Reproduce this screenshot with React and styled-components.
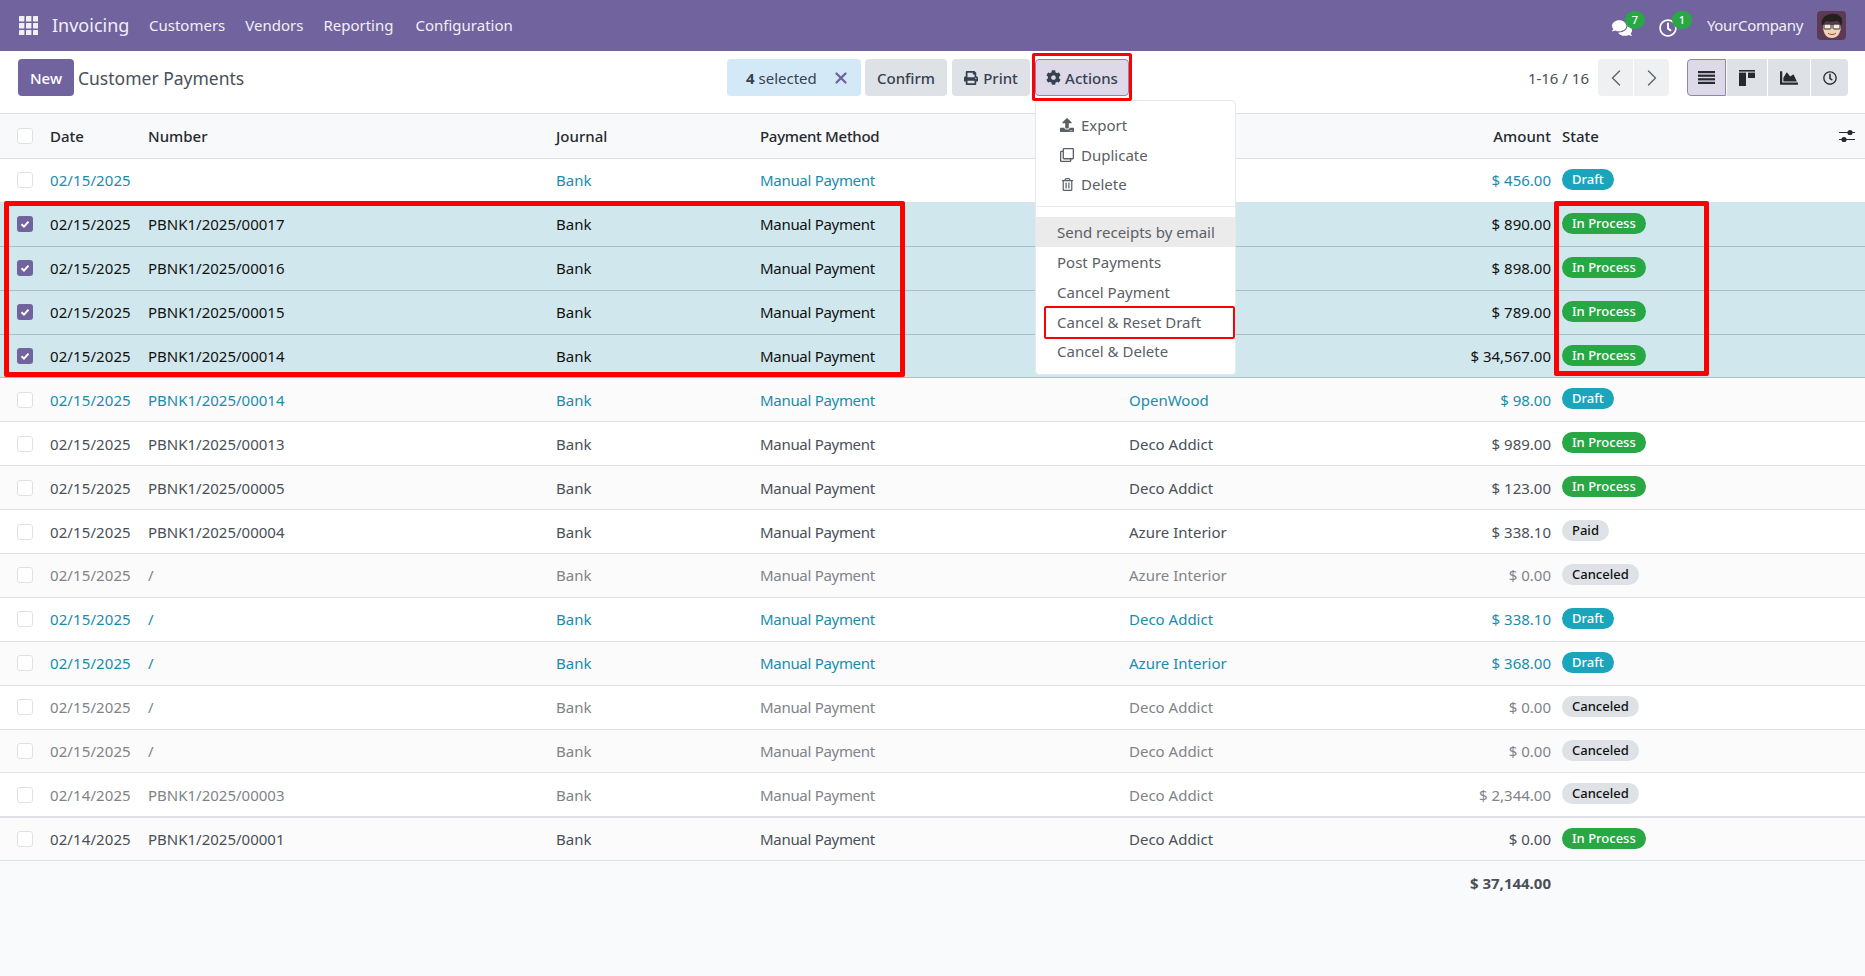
import React from 'react'
import styled, { createGlobalStyle } from 'styled-components'
import { FaCog, FaPrint, FaUpload, FaRegClone, FaRegTrashAlt, FaComments, FaRegClock, FaChartArea } from 'react-icons/fa'
import { ChevronLeft, ChevronRight, X } from 'lucide-react'

const GlobalStyle = createGlobalStyle`
	html, body {
		margin: 0;
		padding: 0;
		background: #fff;
		font-family: "Noto Sans", "Open Sans", sans-serif;
		font-size: 15px;
		color: #495057;
	}
`

const Page = styled.div`
	position: relative;
	width: 1865px;
	height: 976px;
	overflow: hidden;
	display: flex;
	flex-direction: column;
	background: #f9fafb;
`

// Top navigation
const Navbar = styled.header`
	height: 51px;
	flex: none;
	box-sizing: border-box;
	display: flex;
	align-items: center;
	background: #71639e;
	color: #f1eff6;
	padding: 0 19px;
`

const AppsIcon = styled.svg`
	width: 19px;
	height: 19px;
	margin-right: 14px;
	fill: #f1eff6;
`

const Brand = styled.span`
	font-size: 18px;
	width: 97px;
	margin-top: -2px;
`

const NavItem = styled.span`
	font-size: 15px;
	margin-top: -2px;
	margin-right: ${(p) => p.$gap}px;
`

const NavRight = styled.div`
	margin-left: auto;
	display: flex;
	align-items: center;
`

const NavIcon = styled.span`
	position: relative;
	display: flex;
	align-items: center;
	justify-content: center;
	width: 24px;
	height: 24px;
	margin-right: ${(p) => p.$gap}px;
	font-size: ${(p) => p.$size}px;
	color: #fff;
	padding-top: 4px;
	box-sizing: border-box;
`

const CountBadge = styled.span`
	position: absolute;
	top: -3px;
	left: ${(p) => p.$left}px;
	width: 20px;
	height: 18px;
	border-radius: 9px;
	background: #28a745;
	color: #fff;
	font-size: 11px;
	font-weight: 500;
	line-height: 18px;
	text-align: center;
`

const Company = styled.span`
	font-size: 15px;
	margin-top: -2px;
	margin-right: 14px;
	letter-spacing: -0.3px;
`

const Avatar = styled.svg`
	width: 29px;
	height: 29px;
	display: block;
`

// Control panel
const ControlPanel = styled.div`
	height: 62px;
	flex: none;
	box-sizing: border-box;
	padding: 8px 17px 0 18px;
	display: flex;
	align-items: flex-start;
	background: #fff;
`

const TitleArea = styled.div`
	flex: 0 0 709px;
	display: flex;
	align-items: center;
	height: 37px;
`

const NewButton = styled.button`
	width: 56px;
	height: 37px;
	padding: 0;
	border: none;
	border-radius: 4px;
	background: #71639e;
	color: #fff;
	font: 500 15px "Noto Sans", sans-serif;
`

const Title = styled.span`
	font-size: 17.5px;
	margin-left: 4px;
	color: #495057;
`

const Actions = styled.div`
	display: flex;
	align-items: center;
	height: 37px;
`

const SelectedBox = styled.div`
	width: 134px;
	height: 37px;
	box-sizing: border-box;
	padding: 0 11px 0 19px;
	margin-right: 4px;
	display: flex;
	align-items: center;
	justify-content: space-between;
	border-radius: 4px;
	background: #d4e9f7;
	color: #374151;
	font-size: 15px;
	b {
		font-weight: 700;
	}
	svg {
		color: #71639e;
	}
`

const ToolButton = styled.button`
	width: ${(p) => p.$width}px;
	height: 37px;
	padding: 0;
	margin-right: ${(p) => p.$gap}px;
	box-sizing: border-box;
	display: flex;
	align-items: center;
	justify-content: center;
	gap: ${(p) => (p.$active ? 4 : 5)}px;
	border: ${(p) => (p.$active ? '1px solid #8f84b6' : 'none')};
	border-radius: 4px;
	background: ${(p) => (p.$active ? '#ddd9e8' : '#dee2e6')};
	color: #374151;
	font: 500 15px "Noto Sans", sans-serif;
`

const Pager = styled.div`
	margin-left: auto;
	display: flex;
	align-items: center;
	height: 37px;
`

const PagerText = styled.span`
	font-size: 15px;
	margin-right: 9px;
	color: #495057;
`

const PagerButton = styled.button`
	width: 35px;
	height: 37px;
	padding: 0;
	border: none;
	margin-right: ${(p) => (p.$first ? 1 : 0)}px;
	border-radius: ${(p) => (p.$first ? '4px 0 0 4px' : '0 4px 4px 0')};
	background: #eef0f2;
	color: #5f656b;
	display: flex;
	align-items: center;
	justify-content: center;
`

const ViewSwitch = styled.div`
	display: flex;
	margin-left: 18px;
	gap: 1px;
`

const ViewButton = styled.button`
	width: ${(p) => p.$width}px;
	height: 37px;
	padding: 0;
	box-sizing: border-box;
	border: ${(p) => (p.$active ? '1px solid #8f84b6' : 'none')};
	border-radius: ${(p) => p.$radius};
	background: ${(p) => (p.$active ? '#ddd9e8' : '#dee2e6')};
	color: #262a2f;
	display: flex;
	align-items: center;
	justify-content: center;
`

// List table
const columns = '50px 98px 408px 204px 369px 200px 222px 1fr'

const HeadRow = styled.div`
	height: 46px;
	flex: none;
	box-sizing: border-box;
	display: grid;
	grid-template-columns: ${columns};
	align-items: center;
	background: #f8f9fa;
	border-top: 1px solid #dee2e6;
	border-bottom: 1px solid #dee2e6;
	color: #262a2f;
	font-weight: 500;
`

const Row = styled.div`
	height: 43.9px;
	flex: none;
	box-sizing: border-box;
	display: grid;
	grid-template-columns: ${columns};
	align-items: center;
	background: ${(p) => (p.$selected ? '#d0e8ed' : p.$odd ? '#fbfbfb' : '#fff')};
	border-bottom: 1px solid ${(p) => (p.$selected ? '#a9bfc5' : '#dee2e6')};
	border-top: ${(p) => (p.$thick ? '1px solid #dee2e6' : 'none')};
	color: ${(p) => (p.$selected ? '#111' : p.$kind === 'link' ? '#1a8cab' : p.$kind === 'muted' ? '#7f8489' : '#495057')};
`

const CheckCell = styled.div`
	padding-left: 17px;
	display: flex;
	align-items: center;
`

const Check = styled.span`
	width: 16px;
	height: 16px;
	box-sizing: border-box;
	border-radius: 3px;
	border: ${(p) => (p.$checked ? 'none' : '1px solid #dee2e6')};
	background: ${(p) => (p.$checked ? '#71639e' : '#fff')};
	display: flex;
	align-items: center;
	justify-content: center;
`

const DateCell = styled.div`
	letter-spacing: 0.1px;
`

const MethodCell = styled.div`
	letter-spacing: -0.3px;
`

const Amount = styled.div`
	text-align: right;
`

const StateCell = styled.div`
	padding-left: 11px;
	display: flex;
	align-items: center;
	justify-content: space-between;
	padding-right: 10px;
`

const Badge = styled.span`
	height: 21px;
	box-sizing: border-box;
	padding: 0 10px;
	margin-bottom: 2px;
	border-radius: 11px;
	font-size: 13px;
	font-weight: 500;
	line-height: 21px;
	white-space: nowrap;
	background: ${(p) => (p.$state === 'Draft' ? '#1aa5bb' : p.$state === 'In Process' ? '#28a745' : '#dee2e6')};
	color: ${(p) => (p.$state === 'Draft' || p.$state === 'In Process' ? '#fff' : '#111')};
`

const Footer = styled.div`
	display: grid;
	grid-template-columns: ${columns};
	padding-top: 12px;
	color: #495057;
	font-weight: 700;
`

const FooterTotal = styled.div`
	grid-column: 7;
	text-align: right;
`

// Overlays
const Menu = styled.div`
	position: absolute;
	left: 1035px;
	top: 100px;
	width: 201px;
	height: 275px;
	box-sizing: border-box;
	padding-top: 9px;
	background: #fff;
	border: 1px solid #e6e8eb;
	border-radius: 4px;
	color: #5b6066;
	z-index: 2;
`

const MenuItem = styled.div`
	height: 29.8px;
	display: flex;
	align-items: center;
	padding-left: ${(p) => (p.$icon ? 24 : 21)}px;
	gap: 7px;
	background: ${(p) => (p.$hover ? '#ebebeb' : 'transparent')};
`

const MenuIcon = styled.span`
	width: 14px;
	display: flex;
	justify-content: center;
	color: #5b6066;
`

const MenuDivider = styled.div`
	height: 1px;
	background: #e9ecef;
	margin: 7px 0 10px;
`

const RedBox = styled.div`
	position: absolute;
	left: ${(p) => p.$left}px;
	top: ${(p) => p.$top}px;
	width: ${(p) => p.$width}px;
	height: ${(p) => p.$height}px;
	box-sizing: border-box;
	border: ${(p) => p.$line}px solid #fe0000;
	border-radius: 2px;
	z-index: 3;
	pointer-events: none;
`

const rows = [
	{ number: '', partner: '', amount: '$ 456.00', state: 'Draft', kind: 'link' },
	{ number: 'PBNK1/2025/00017', partner: '', amount: '$ 890.00', state: 'In Process', selected: true },
	{ number: 'PBNK1/2025/00016', partner: '', amount: '$ 898.00', state: 'In Process', selected: true },
	{ number: 'PBNK1/2025/00015', partner: '', amount: '$ 789.00', state: 'In Process', selected: true },
	{ number: 'PBNK1/2025/00014', partner: '', amount: '$ 34,567.00', state: 'In Process', selected: true },
	{ number: 'PBNK1/2025/00014', partner: 'OpenWood', amount: '$ 98.00', state: 'Draft', kind: 'link' },
	{ number: 'PBNK1/2025/00013', partner: 'Deco Addict', amount: '$ 989.00', state: 'In Process' },
	{ number: 'PBNK1/2025/00005', partner: 'Deco Addict', amount: '$ 123.00', state: 'In Process' },
	{ number: 'PBNK1/2025/00004', partner: 'Azure Interior', amount: '$ 338.10', state: 'Paid' },
	{ number: '/', partner: 'Azure Interior', amount: '$ 0.00', state: 'Canceled', kind: 'muted' },
	{ number: '/', partner: 'Deco Addict', amount: '$ 338.10', state: 'Draft', kind: 'link' },
	{ number: '/', partner: 'Azure Interior', amount: '$ 368.00', state: 'Draft', kind: 'link' },
	{ number: '/', partner: 'Deco Addict', amount: '$ 0.00', state: 'Canceled', kind: 'muted' },
	{ number: '/', partner: 'Deco Addict', amount: '$ 0.00', state: 'Canceled', kind: 'muted' },
	{ number: 'PBNK1/2025/00003', date: '02/14/2025', partner: 'Deco Addict', amount: '$ 2,344.00', state: 'Canceled', kind: 'muted' },
	{ number: 'PBNK1/2025/00001', date: '02/14/2025', partner: 'Deco Addict', amount: '$ 0.00', state: 'In Process', thick: true },
]

const CheckMark = () => (
	<svg width="10" height="10" viewBox="0 0 10 10" fill="none" stroke="#fff" strokeWidth="2">
		<path d="M1.5 5.2 L4 7.6 L8.5 2.6" />
	</svg>
)

const AppsGlyph = () => (
	<AppsIcon viewBox="0 0 19 19">
		{[0, 7, 14].map((y) =>
			[0, 7, 14].map((x) => <rect key={`${x}-${y}`} x={x} y={y} width="5.4" height="5.4" rx="0.4" />),
		)}
	</AppsIcon>
)

const AvatarFace = () => (
	<Avatar viewBox="0 0 29 29">
		<rect width="29" height="29" rx="4" fill="#5c3a54" />
		<path d="M6 14 C6 24 10 27 15 27 C20 27 24 23 24 14 Z" fill="#f4d0b4" />
		<path d="M5 15 C3 7 9 3 15 3 C21 2 26 6 25 11 L24 16 C23 12 22 10 20 10 C15 11 11 11 9 10 C8 12 6 13 5 15 Z" fill="#23201f" />
		<rect x="7" y="13" width="7" height="5" rx="1" fill="#fff" fillOpacity="0.55" stroke="#333" strokeWidth="1" />
		<rect x="16" y="13" width="7" height="5" rx="1" fill="#fff" fillOpacity="0.55" stroke="#333" strokeWidth="1" />
		<path d="M11 22 C13 24 17 24 19 22" fill="none" stroke="#8a4a3a" strokeWidth="1" />
	</Avatar>
)

const ListIcon = () => (
	<svg width="17" height="13" viewBox="0 0 17 13" fill="currentColor">
		<rect y="0" width="17" height="2.2" />
		<rect y="3.6" width="17" height="2.2" />
		<rect y="7.2" width="17" height="2.2" />
		<rect y="10.8" width="17" height="2.2" />
	</svg>
)

const KanbanIcon = () => (
	<svg width="16" height="16" viewBox="0 0 16 16" fill="currentColor">
		<rect width="16" height="1.6" />
		<rect y="2.6" width="7" height="13.4" />
		<rect x="9" y="2.6" width="7" height="5.4" />
	</svg>
)

const SliderIcon = () => (
	<svg width="16" height="14" viewBox="0 0 16 14" fill="#262a2f">
		<rect y="3" width="16" height="1" />
		<circle cx="11" cy="3.5" r="2.6" />
		<rect y="10" width="16" height="1" />
		<circle cx="5" cy="10.5" r="2.6" />
	</svg>
)

const App = () => {
	return (
		<Page>
			<GlobalStyle />
			<Navbar>
				<AppsGlyph />
				<Brand>Invoicing</Brand>
				<NavItem $gap={20}>Customers</NavItem>
				<NavItem $gap={20}>Vendors</NavItem>
				<NavItem $gap={22}>Reporting</NavItem>
				<NavItem $gap={0}>Configuration</NavItem>
				<NavRight>
					<NavIcon $gap={22} $size={20}>
						<FaComments />
						<CountBadge $left={15}>7</CountBadge>
					</NavIcon>
					<NavIcon $gap={27} $size={18}>
						<FaRegClock />
						<CountBadge $left={16}>1</CountBadge>
					</NavIcon>
					<Company>YourCompany</Company>
					<AvatarFace />
				</NavRight>
			</Navbar>

			<ControlPanel>
				<TitleArea>
					<NewButton>New</NewButton>
					<Title>Customer Payments</Title>
				</TitleArea>
				<Actions>
					<SelectedBox>
						<span>
							<b>4</b> selected
						</span>
						<X size={18} strokeWidth={3} />
					</SelectedBox>
					<ToolButton $width={82} $gap={5}>Confirm</ToolButton>
					<ToolButton $width={78} $gap={5}>
						<FaPrint size={14} />
						Print
					</ToolButton>
					<ToolButton $width={94} $gap={0} $active>
						<FaCog size={15} />
						Actions
					</ToolButton>
				</Actions>
				<Pager>
					<PagerText>1-16 / 16</PagerText>
					<PagerButton $first>
						<ChevronLeft size={28} strokeWidth={1.2} />
					</PagerButton>
					<PagerButton>
						<ChevronRight size={28} strokeWidth={1.2} />
					</PagerButton>
					<ViewSwitch>
						<ViewButton $width={39} $radius="4px 0 0 4px" $active>
							<ListIcon />
						</ViewButton>
						<ViewButton $width={40} $radius="0">
							<KanbanIcon />
						</ViewButton>
						<ViewButton $width={42} $radius="0">
							<FaChartArea size={18} />
						</ViewButton>
						<ViewButton $width={37} $radius="0 4px 4px 0">
							<FaRegClock size={14} />
						</ViewButton>
					</ViewSwitch>
				</Pager>
			</ControlPanel>

			<HeadRow>
				<CheckCell>
					<Check />
				</CheckCell>
				<div>Date</div>
				<div>Number</div>
				<div>Journal</div>
				<MethodCell>Payment Method</MethodCell>
				<div />
				<Amount>Amount</Amount>
				<StateCell>
					<span>State</span>
					<SliderIcon />
				</StateCell>
			</HeadRow>

			{rows.map((row, i) => (
				<Row key={i} $selected={row.selected} $odd={i % 2 === 1} $kind={row.kind} $thick={row.thick}>
					<CheckCell>
						<Check $checked={row.selected}>{row.selected && <CheckMark />}</Check>
					</CheckCell>
					<DateCell>{row.date || '02/15/2025'}</DateCell>
					<div>{row.number}</div>
					<div>Bank</div>
					<MethodCell>Manual Payment</MethodCell>
					<div>{row.partner}</div>
					<Amount>{row.amount}</Amount>
					<StateCell>
						<Badge $state={row.state}>{row.state}</Badge>
					</StateCell>
				</Row>
			))}

			<Footer>
				<FooterTotal>$ 37,144.00</FooterTotal>
			</Footer>

			<Menu>
				<MenuItem $icon>
					<MenuIcon><FaUpload size={14} /></MenuIcon>
					Export
				</MenuItem>
				<MenuItem $icon>
					<MenuIcon><FaRegClone size={14} /></MenuIcon>
					Duplicate
				</MenuItem>
				<MenuItem $icon>
					<MenuIcon><FaRegTrashAlt size={13} /></MenuIcon>
					Delete
				</MenuItem>
				<MenuDivider />
				<MenuItem $hover>Send receipts by email</MenuItem>
				<MenuItem>Post Payments</MenuItem>
				<MenuItem>Cancel Payment</MenuItem>
				<MenuItem>Cancel &amp; Reset Draft</MenuItem>
				<MenuItem>Cancel &amp; Delete</MenuItem>
			</Menu>

			<RedBox $left={1032} $top={53} $width={100} $height={48} $line={3} />
			<RedBox $left={1044} $top={306} $width={191} $height={33} $line={2} />
			<RedBox $left={4} $top={201} $width={901} $height={176} $line={5} />
			<RedBox $left={1554} $top={201} $width={155} $height={175} $line={5} />
		</Page>
	)
}

export default App
